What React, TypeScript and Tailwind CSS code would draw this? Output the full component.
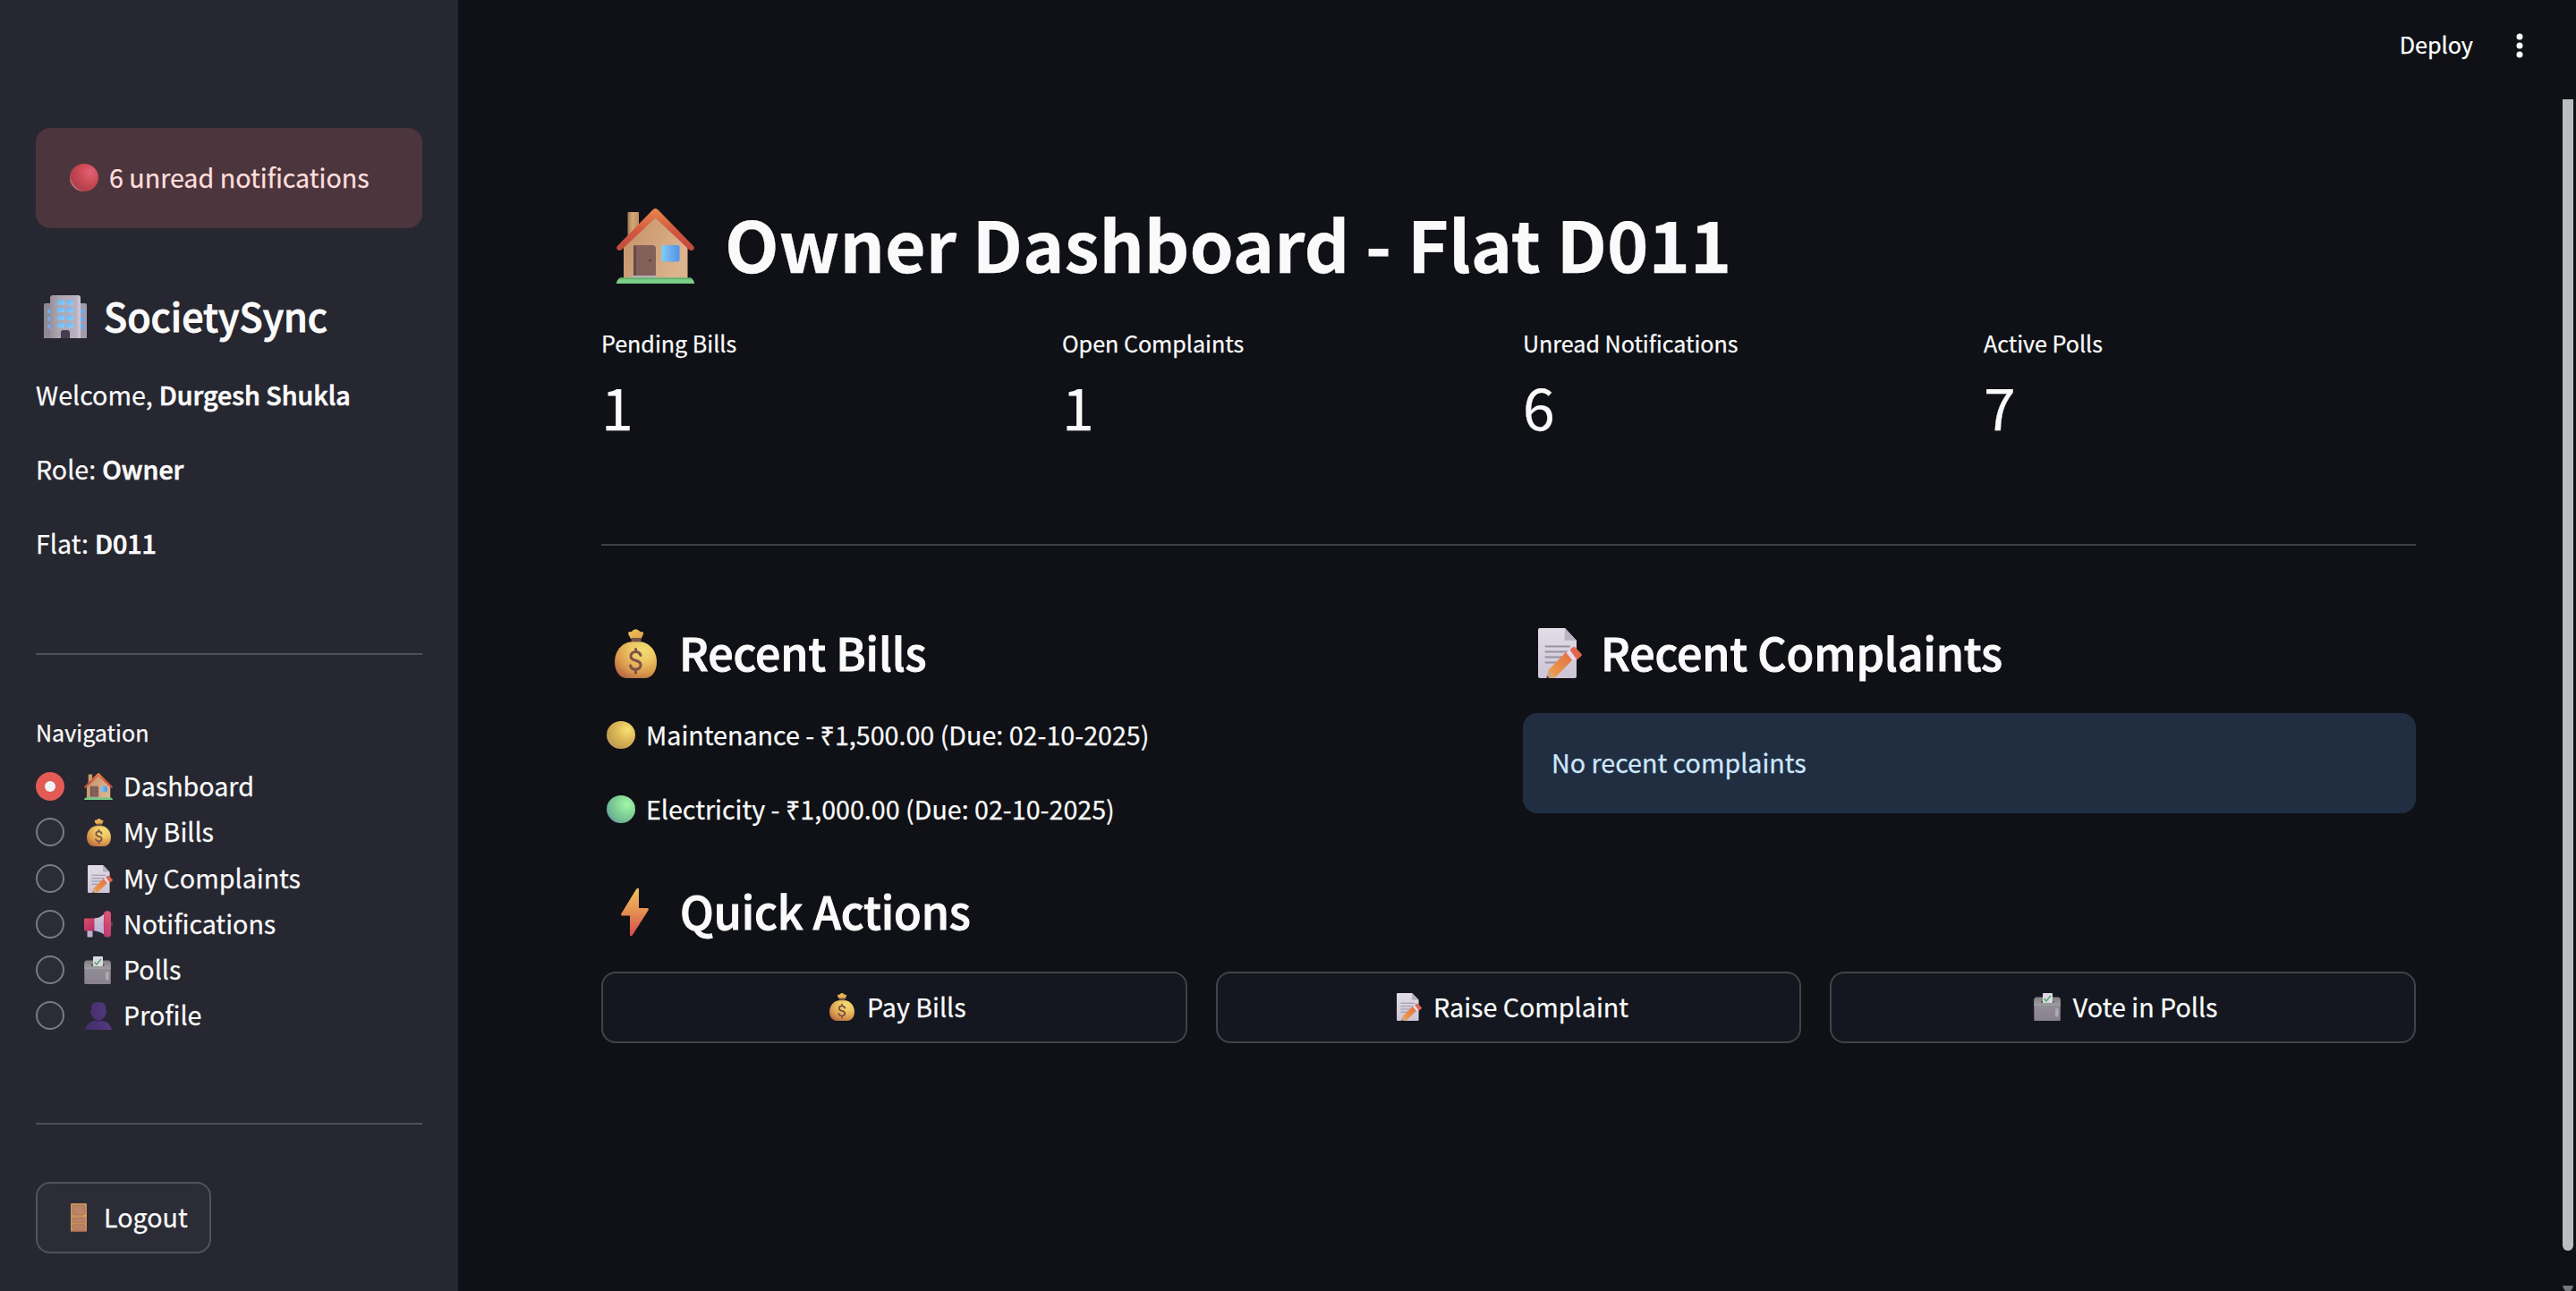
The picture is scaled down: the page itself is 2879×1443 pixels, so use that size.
import React from "react";

type IconProps = { className?: string };

function House({ className }: IconProps) {
  return (
    <svg viewBox="0 0 87 84" preserveAspectRatio="none" className={className}>
      <defs>
        <linearGradient id="hWall" x1="0" y1="0" x2="1" y2="0.4">
          <stop offset="0" stopColor="#c0936a" />
          <stop offset="0.5" stopColor="#d0a078" />
          <stop offset="1" stopColor="#dcb48e" />
        </linearGradient>
        <linearGradient id="hRoof" x1="0" y1="0" x2="0" y2="1">
          <stop offset="0" stopColor="#e8864c" />
          <stop offset="0.55" stopColor="#d2573f" />
          <stop offset="1" stopColor="#c24a3e" />
        </linearGradient>
        <linearGradient id="hChim" x1="0" y1="0" x2="1" y2="0">
          <stop offset="0" stopColor="#9d7a52" />
          <stop offset="0.4" stopColor="#d3a775" />
          <stop offset="1" stopColor="#bd9262" />
        </linearGradient>
        <linearGradient id="hWin" x1="0" y1="0" x2="1" y2="0">
          <stop offset="0" stopColor="#74d4fd" />
          <stop offset="0.35" stopColor="#75b4ee" />
          <stop offset="1" stopColor="#4f93e6" />
        </linearGradient>
      </defs>
      <rect x="12.5" y="4" width="12.5" height="34" rx="1" fill="url(#hChim)" />
      <path d="M8 42 43.5 8 79.5 42V79H8Z" fill="url(#hWall)" />
      <path d="M43.5 0C45 0 46 1 47 2L86 42C89 46 83 49 80 45L43.5 10.500 7 45C4 49-2 46 1 42L40 2C41 1 42 0 43.500 0Z" fill="url(#hRoof)" />
      <rect x="19" y="41" width="25" height="36" rx="4" fill="#83605a" />
      <rect x="19" y="41" width="3" height="36" rx="1.500" fill="#664a47" />
      <circle cx="37.500" cy="58" r="1.600" fill="#654640" />
      <rect x="17" y="75" width="29.500" height="3.500" rx="1.500" fill="#b8b0b5" />
      <rect x="50.500" y="41" width="20" height="18.500" rx="2.500" fill="url(#hWin)" />
      <path d="M4 77.500H83Q87 80 87 84H0Q0 80 4 77.500Z" fill="#7bd087" />
      <path d="M4 77.500H83L84.500 79.200H2.500Z" fill="#62ae6e" />
    </svg>
  );
}

function MoneyBag({ className }: IconProps) {
  return (
    <svg viewBox="0 0 47 55" preserveAspectRatio="none" className={className}>
      <defs>
        <radialGradient id="mbBody" cx="0.68" cy="0.22" r="0.9">
          <stop offset="0" stopColor="#f3dc72" />
          <stop offset="0.35" stopColor="#ecc763" />
          <stop offset="0.7" stopColor="#db9a4c" />
          <stop offset="1" stopColor="#b26542" />
        </radialGradient>
        <linearGradient id="mbTop" x1="0" y1="0" x2="1" y2="1">
          <stop offset="0" stopColor="#efc35c" />
          <stop offset="1" stopColor="#df9d4c" />
        </linearGradient>
      </defs>
      <path d="M16 3Q19 4 20 1.800Q23.500-1.500 27 1.800Q29 4 31 3Q33 4 31.500 7L29.500 11H18L15.800 7Q14.500 4 16 3Z" fill="url(#mbTop)" />
      <rect x="18.500" y="10" width="11" height="6" fill="#76504a" />
      <path d="M18 14.500H29.500C38 15 47 24 47 37C47 48 41 55 33.500 55H13.500C6 55 0 48 0 37C0 24 9 15 18 14.500Z" fill="url(#mbBody)" />
      <path d="M29 29.500C28 26.500 26 25.500 23.500 25.500C20.500 25.500 18 27.300 18 30.500C18 37 29 33.500 29 40C29 43.500 26.500 45.300 23.500 45.300C20.500 45.300 18.300 44 17.500 41M23.500 22.500V25.500M23.500 45V49" fill="none" stroke="#7c5049" strokeWidth="3" strokeLinecap="round" />
    </svg>
  );
}

function Memo({ className }: IconProps) {
  return (
    <svg viewBox="0 0 49 56" preserveAspectRatio="none" className={className}>
      <defs>
        <linearGradient id="mePaper" x1="0" y1="0" x2="0" y2="1">
          <stop offset="0" stopColor="#e2dce8" />
          <stop offset="1" stopColor="#cdc5d6" />
        </linearGradient>
        <linearGradient id="mePencil" x1="0" y1="1" x2="1" y2="0">
          <stop offset="0" stopColor="#eda252" />
          <stop offset="1" stopColor="#e0703f" />
        </linearGradient>
      </defs>
      <path d="M2 0H30L43 14V54Q43 56 41 56H2Q0 56 0 54V2Q0 0 2 0Z" fill="url(#mePaper)" />
      <path d="M30 0 43 14H32Q29.500 14 29.500 12Z" fill="#b9b2c0" />
      <path d="M8.500 20.500H35M8.500 26.500H35M8.500 32.500H32M8.500 38.500H27" stroke="#98919f" strokeWidth="1.900" strokeLinecap="round" />
      <path d="M11.500 47 31.500 26.500 38.500 35.500 19 55.500Z" fill="url(#mePencil)" />
      <path d="M11.500 47 19 55.500 18.500 56H9.500Z" fill="#d3a482" />
      <path d="M10 53 12.500 56H9.200Z" fill="#6b3c50" />
      <path d="M31.500 27.500 35.500 23.500 43 32.500 38.800 36.700Z" fill="#e3dbef" />
      <path d="M35.500 24.500 39 21.300Q41 20.500 42 22L48.500 29Q49.500 30.500 48 31.500L43.500 35.500Z" fill="#e1664f" />
    </svg>
  );
}

function Bolt({ className }: IconProps) {
  return (
    <svg viewBox="0 0 31 53" preserveAspectRatio="none" className={className}>
      <defs>
        <linearGradient id="boFill" x1="0" y1="0" x2="0" y2="1">
          <stop offset="0" stopColor="#efc060" />
          <stop offset="0.45" stopColor="#e59451" />
          <stop offset="1" stopColor="#d64c50" />
        </linearGradient>
      </defs>
      <path d="M18 0H20V22H30Q31.500 22.500 30.500 24.500L13 52Q12.500 53 11.500 53H10V30.500H1Q-.5 30 .5 28L17 1Z" fill="url(#boFill)" />
    </svg>
  );
}

function Building({ className }: IconProps) {
  return (
    <svg viewBox="0 0 48 48" className={className}>
      <defs>
        <linearGradient id="buMid" x1="0" y1="0" x2="1" y2="0">
          <stop offset="0" stopColor="#99909d" />
          <stop offset="0.3" stopColor="#aea6b0" />
          <stop offset="0.85" stopColor="#b9b0bf" />
          <stop offset="1" stopColor="#d3cbdb" />
        </linearGradient>
        <linearGradient id="buWin" x1="0" y1="0" x2="1" y2="1">
          <stop offset="0" stopColor="#6cb2f6" />
          <stop offset="1" stopColor="#86d2fd" />
        </linearGradient>
      </defs>
      <path d="M0 11Q0 9 2 9H10V48H0Z" fill="#8f8892" />
      <path d="M38 9H46Q48 9 48 11V48H38Z" fill="#a39baa" />
      {[15.5, 24, 32.5].map((y) => (
        <g key={y} fill="#68aef4">
          <rect x="4" y={y} width="4" height="5" rx="1" />
          <rect x="40" y={y} width="5" height="5" rx="1" />
        </g>
      ))}
      <path d="M7 3Q7 0 10 0H38Q41 0 41 3V48H7Z" fill="url(#buMid)" />
      {[5.5, 14, 22.5, 31].map((y) => (
        <g key={y} fill="url(#buWin)">
          <rect x="15" y={y} width="8" height="5.200" rx="0.800" />
          <rect x="25" y={y} width="8" height="5.200" rx="0.800" />
        </g>
      ))}
      <path d="M19 48V41.500Q19 39 21.500 39H26.500Q29 39 29 41.500V48Z" fill="#473d50" />
    </svg>
  );
}

function Megaphone({ className }: IconProps) {
  return (
    <svg viewBox="0 0 32 30" className={className}>
      <defs>
        <linearGradient id="mgBack" x1="0" y1="0" x2="0.6" y2="1">
          <stop offset="0" stopColor="#da4f62" />
          <stop offset="1" stopColor="#b6306c" />
        </linearGradient>
        <linearGradient id="mgCone" x1="0" y1="0" x2="0" y2="1">
          <stop offset="0" stopColor="#cfcad4" />
          <stop offset="1" stopColor="#b8add2" />
        </linearGradient>
        <linearGradient id="mgRim" x1="0" y1="0" x2="0" y2="1">
          <stop offset="0" stopColor="#df5676" />
          <stop offset="1" stopColor="#c23a72" />
        </linearGradient>
      </defs>
      <rect x="3.500" y="20" width="6" height="9.500" rx="0.800" fill="#bdb2d4" />
      <path d="M1 8.500H12V22.500H1Q0 22.500 0 21.500V9.500Q0 8.500 1 8.500Z" fill="url(#mgBack)" />
      <path d="M11.500 8.500Q18 8 23 3V27Q18 23 11.500 22.500Z" fill="url(#mgCone)" />
      <ellipse cx="29.500" cy="15" rx="2.500" ry="3.200" fill="#4a4656" />
      <rect x="22" y="0.300" width="8" height="29.200" rx="3.500" fill="url(#mgRim)" />
      <path d="M25 0.500Q22.200 4 22.200 15T25 29.300Q21.800 27 21.800 15T25 0.500Z" fill="#9e2b57" />
    </svg>
  );
}

function Ballot({ className }: IconProps) {
  return (
    <svg viewBox="0 0 30 31" className={className}>
      <defs>
        <linearGradient id="baBox" x1="0" y1="0" x2="0" y2="1">
          <stop offset="0" stopColor="#97949a" />
          <stop offset="1" stopColor="#878190" />
        </linearGradient>
        <linearGradient id="baLid" x1="0" y1="0" x2="0" y2="1">
          <stop offset="0" stopColor="#7f7e80" />
          <stop offset="1" stopColor="#a09fa1" />
        </linearGradient>
      </defs>
      <rect x="0.300" y="6" width="29.500" height="25" rx="1.300" fill="url(#baBox)" />
      <path d="M2.500 4.500H27.500Q29 4.500 29.500 6.500L29.800 14H.2L.7 6.500Q1 4.500 2.500 4.500Z" fill="url(#baLid)" />
      <rect x="8" y="8.800" width="14.500" height="2" rx="1" fill="#4a4653" />
      <rect x="10" y="0" width="11" height="11" rx="0.800" fill="#dcd9e4" />
      <path d="M11.500 6.300 14 9 18.800 3" fill="none" stroke="#5cab6b" strokeWidth="1.700" />
      <rect x="24" y="17" width="3.600" height="9.500" rx="1.600" fill="#adabb0" />
    </svg>
  );
}

function Person({ className }: IconProps) {
  return (
    <svg viewBox="0 0 30 31" className={className}>
      <defs>
        <linearGradient id="peFill" x1="0" y1="0" x2="1" y2="0">
          <stop offset="0" stopColor="#432d68" />
          <stop offset="1" stopColor="#543a83" />
        </linearGradient>
      </defs>
      <path d="M15 0C20 0 23 2 23 6.500V9C24.500 9 24.500 13 23 13C22.600 16.500 20.500 18.500 18.500 19.500V21C24 21.500 28.500 24.500 30 31H0C1.500 24.500 6 21.500 11.500 21V19.500C9.500 18.500 7.400 16.500 7 13C5.500 13 5.500 9 7 9V6.500C7 2 10 0 15 0Z" fill="url(#peFill)" />
      <path d="M10.500 19C13 20.800 17 20.800 19.500 19L18.500 21Q15 22 11.500 21Z" fill="#38255a" />
    </svg>
  );
}

function Door({ className }: IconProps) {
  return (
    <svg viewBox="0 0 18 32" className={className}>
      <rect width="18" height="32" rx="0.800" fill="#c8925f" />
      <rect y="30.500" width="18" height="1.500" rx="0.700" fill="#9a5e58" />
      <g fill="#b98467" stroke="#a87154" strokeWidth="0.800">
        <rect x="2.400" y="2.400" width="13.200" height="10.400" rx="0.800" />
        <rect x="2.400" y="16.400" width="13.200" height="5.200" rx="0.800" />
        <rect x="2.400" y="23.900" width="13.200" height="5" rx="0.800" />
      </g>
      <circle cx="16" cy="13.700" r="1.100" fill="#eeb544" />
    </svg>
  );
}

const ballTones = {
  red: ["#e4607a", "#cf4c56", "#b03f4d", "#c98585"],
  yellow: ["#f7e274", "#dfbb59", "#c3a04f", "#c99a76"],
  green: ["#9ff7a9", "#86d896", "#6bb394", "#6a93ac"],
};

function Ball({ tone, className }: { tone: keyof typeof ballTones; className?: string }) {
  const [a, b, c, d] = ballTones[tone];
  return (
    <svg viewBox="0 0 32 31" preserveAspectRatio="none" className={className}>
      <defs>
        <radialGradient id={`ball-${tone}`} cx="0.72" cy="0.32" r="0.78">
          <stop offset="0" stopColor={a} />
          <stop offset="0.45" stopColor={b} />
          <stop offset="0.9" stopColor={c} />
          <stop offset="1" stopColor={d} />
        </radialGradient>
      </defs>
      <ellipse cx="16" cy="15.500" rx="16" ry="15.500" fill={`url(#ball-${tone})`} />
    </svg>
  );
}

const navItems = [
  { label: "Dashboard", icon: <House className="h-[30px] w-8" />, active: true },
  { label: "My Bills", icon: <MoneyBag className="h-[31px] w-[27px]" /> },
  { label: "My Complaints", icon: <Memo className="ml-1 h-[31px] w-7" /> },
  { label: "Notifications", icon: <Megaphone className="h-[30px] w-8" /> },
  { label: "Polls", icon: <Ballot className="mr-0.5 h-[31px] w-[30px]" /> },
  { label: "Profile", icon: <Person className="h-[31px] w-[30px]" /> },
];

const metrics = [
  ["Pending Bills", "1"],
  ["Open Complaints", "1"],
  ["Unread Notifications", "6"],
  ["Active Polls", "7"],
];

const strong = "ml-[0.6px] font-medium [-webkit-text-stroke:0.7px_currentColor]";
const body = "text-[28.65px] leading-[41px] whitespace-nowrap";
const heading = "text-[50.1px] leading-[72px] font-medium tracking-[-0.1px] whitespace-nowrap [-webkit-text-stroke:1px_currentColor]";

function Sidebar() {
  return (
    <aside className="flex w-[512px] shrink-0 flex-col bg-[#262730] px-10 pt-[143px]">
      <div className="flex h-28 items-start rounded-2xl bg-[#4c353c] pl-[38px] text-[#ffdede]">
        <Ball tone="red" className="mt-10 h-[31px] w-8" />
        <span className={`mt-[34px] ml-3 ${body}`}>6 unread notifications</span>
      </div>

      <div className="mt-[66px] flex items-start pl-[9px]">
        <Building className="mt-[9px] size-12" />
        <h2 className="ml-[19px] text-[43px] leading-[62px] font-medium [-webkit-text-stroke:0.9px_currentColor]">SocietySync</h2>
      </div>

      <div className={`mt-[37px] flex flex-col gap-[42px] ${body}`}>
        <p>Welcome, <strong className={strong}>Durgesh Shukla</strong></p>
        <p>Role: <strong className={strong}>Owner</strong></p>
        <p>Flat: <strong className={strong}>D011</strong></p>
      </div>

      <div className="mt-[103px] h-0.5 shrink-0 bg-[#4e4f58]" />

      <p className="mt-[68px] text-[25.07px] leading-[36px]">Navigation</p>
      <nav className="mt-[18px] flex flex-col">
        {navItems.map((item) => (
          <div key={item.label} className="mb-px flex h-[50px] items-center [&:nth-child(2)]:mb-0.5">
            {item.active ? (
              <span className="flex size-8 items-center justify-center rounded-full bg-[#e25b55]">
                <span className="size-3 rounded-full bg-[#f0f2f6]" />
              </span>
            ) : (
              <span className="size-8 rounded-full border-2 border-[#7b7c80] bg-[#2b2c36]" />
            )}
            <span className="ml-5 flex w-9 justify-center">{item.icon}</span>
            <span className={`ml-2.5 self-start pt-[3px] ${body}`}>{item.label}</span>
          </div>
        ))}
      </nav>

      <div className="mt-[94px] h-0.5 shrink-0 bg-[#4e4f58]" />

      <button className="mt-16 flex h-20 w-[196px] items-start rounded-2xl border-2 border-[#52535c] bg-[#2b2c36] pl-[37px]">
        <Door className="mt-[22px] h-8 w-[18px]" />
        <span className={`mt-4 ml-[19px] ${body}`}>Logout</span>
      </button>
    </aside>
  );
}

function ActionButton({ icon, label }: { icon: React.ReactNode; label: string }) {
  return (
    <button className="flex h-20 items-start justify-center rounded-2xl border-2 border-[#414349] bg-[#14171f]">
      <span className="mt-[22px] w-[50px]">{icon}</span>
      <span className={`mt-4 ${body}`}>{label}</span>
    </button>
  );
}

export default function App() {
  return (
    <div className="flex h-[1443px] w-[2879px] overflow-hidden bg-[#0f1116] font-['Noto_Sans_CJK_SC','Noto_Sans',sans-serif] text-[#fafafa] [-webkit-text-stroke:0.25px_currentColor]">
      <Sidebar />

      <div className="flex min-w-0 flex-1 flex-col">
        <header className="flex h-[111px] shrink-0 items-start justify-end">
          <span className="mt-[31px] text-[25.2px] leading-[36px] text-white">Deploy</span>
          <svg viewBox="0 0 8 28" className="mt-[37px] mr-[59px] ml-12 h-7 w-2" fill="#fff">
            <circle cx="4" cy="4" r="3.500" />
            <circle cx="4" cy="14" r="3.500" />
            <circle cx="4" cy="24" r="3.500" />
          </svg>
        </header>

        <div className="flex min-h-0 flex-1">
          <main className="flex-1 pt-[103px] pr-[164px] pl-40">
            <div className="flex items-start pl-[17px]">
              <House className="mt-[19px] h-[84px] w-[87px]" />
              <h1 className="ml-[34px] text-[78.8px] leading-[114px] font-bold tracking-[-0.06px]">Owner Dashboard - Flat D011</h1>
            </div>

            <div className="mt-[37px] grid grid-cols-4 gap-8">
              {metrics.map(([label, value]) => (
                <div key={label}>
                  <p className="text-[25.07px] leading-[36px]">{label}</p>
                  <p className="mt-[5px] text-[64.4px] leading-[94px]">{value}</p>
                </div>
              ))}
            </div>

            <div className="mt-[108px] h-0.5 bg-[#3f4045]" />

            <div className="mt-[82px] grid grid-cols-2 gap-8">
              <section>
                <div className="flex items-start pl-[15px]">
                  <MoneyBag className="mt-[11px] h-[55px] w-[47px]" />
                  <h2 className={`ml-[25px] ${heading}`}>Recent Bills</h2>
                </div>
                <div className="mt-9 flex flex-col gap-[42px]">
                  <div className="flex items-start pl-1.5">
                    <Ball tone="yellow" className="mt-1.5 h-[31px] w-8" />
                    <p className={`ml-3 ${body}`}>Maintenance - ₹1,500.00 (Due: 02-10-2025)</p>
                  </div>
                  <div className="flex items-start pl-1.5">
                    <Ball tone="green" className="mt-1.5 h-[31px] w-8" />
                    <p className={`ml-3 ${body}`}>Electricity - ₹1,000.00 (Due: 02-10-2025)</p>
                  </div>
                </div>
              </section>
              <section>
                <div className="flex items-start pl-[17px]">
                  <Memo className="mt-2.5 h-14 w-[49px]" />
                  <h2 className={`ml-[21px] ${heading}`}>Recent Complaints</h2>
                </div>
                <div className={`mt-[33px] h-28 rounded-2xl bg-[#212e42] pt-[34px] pl-8 text-[#cde8fd] ${body}`}>No recent complaints</div>
              </section>
            </div>

            <div className="mt-[57px] flex items-start pl-[22px]">
              <Bolt className="mt-3 h-[53px] w-[31px]" />
              <h2 className={`ml-[35px] ${heading}`}>Quick Actions</h2>
            </div>
            <div className="mt-[33px] grid grid-cols-3 gap-8">
              <ActionButton icon={<MoneyBag className="ml-2 h-[31px] w-7" />} label="Pay Bills" />
              <ActionButton icon={<Memo className="ml-[9px] h-[31px] w-7" />} label="Raise Complaint" />
              <ActionButton icon={<Ballot className="ml-1.5 h-[31px] w-[30px]" />} label="Vote in Polls" />
            </div>
          </main>

          <div className="mr-[3px] flex w-3 flex-col justify-between">
            <div className="h-[1287px] rounded-b-full bg-[#bcbdbe]" />
            <svg viewBox="0 0 12 6" className="h-1.5 w-3">
              <path d="M0 0H12Q11.500 3 9 6H3Q.5 3 0 0Z" fill="#77787b" />
            </svg>
          </div>
        </div>
      </div>
    </div>
  );
}
